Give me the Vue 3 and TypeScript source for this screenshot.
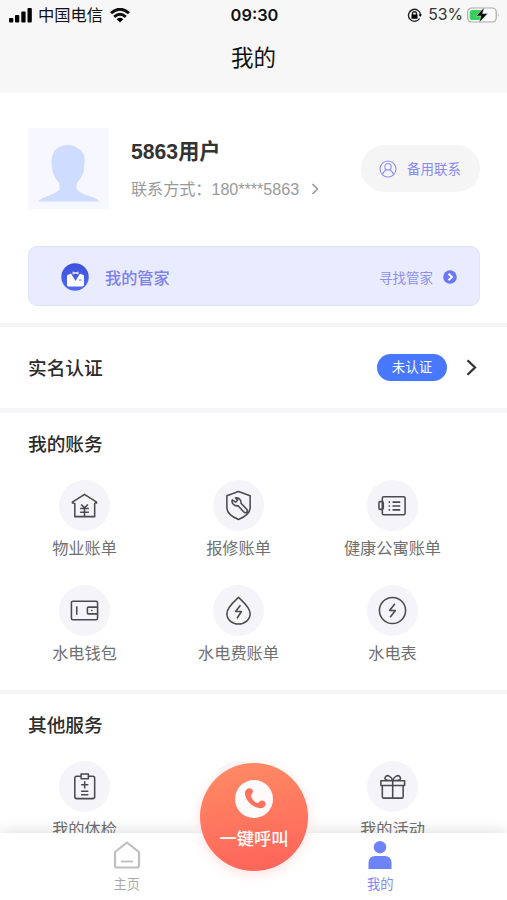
<script setup lang="ts">
type IconName = 'house' | 'repair' | 'apartment' | 'wallet' | 'drop' | 'meter' | 'checkup' | 'blank' | 'gift'
interface Entry {
  icon: IconName
  label: string
}

const bills: Entry[] = [
  { icon: 'house', label: '物业账单' },
  { icon: 'repair', label: '报修账单' },
  { icon: 'apartment', label: '健康公寓账单' },
  { icon: 'wallet', label: '水电钱包' },
  { icon: 'drop', label: '水电费账单' },
  { icon: 'meter', label: '水电表' },
]
const services: Entry[] = [
  { icon: 'checkup', label: '我的体检' },
  { icon: 'blank', label: '' },
  { icon: 'gift', label: '我的活动' },
]
const sections = [
  { title: '我的账务', items: bills },
  { title: '其他服务', items: services },
]
const paths: Record<IconName, string> = {
  house: 'M5.500 13.500H3.500V12.500L16 4.500 28.500 12.500V13.500H26.500M6 13.500V27.500H26.500V13.500M12.500 15l3.500 3.500 3.500-3.500M11.500 19h9M11.500 23h9M16 18.500v8',
  repair: 'M16 1.500 28 6V19C27.500 24.500 22 28 16 30.500 10 28 4.500 24.500 4 19V6ZM9.600 10.200l3.400 2.400 2.200-2.200-2.400-2.200c2.800-.8 6.200 1.400 5.800 5.400l6.200 6.600c1.300 2.200-1.600 4.400-3.300 2.600l-5.900-6.500c-4 .6-7.200-2.800-6-6.100Z',
  apartment: 'M7 7H27.500Q29 7 29 8.500V24Q29 25.500 27.500 25.500H7Q5.500 25.500 5.500 24V8.500Q5.500 7 7 7ZM2.800 12H5.200Q6.500 12 6.500 13.500V18.500Q6.500 20 5.200 20H2.800Q2 20 2 18.500V13.500Q2 12 2.800 12ZM12 12.500h1.500M16 12.500h8M12 16.500h1.500M16 16.500h8M12 20.500h1.500M16 20.500h8',
  wallet: 'M4 6.500H28Q29.500 6.500 29.500 8V24Q29.500 25.500 28 25.500H4Q2.500 25.500 2.500 24V8Q2.500 6.500 4 6.500ZM8 11.500v9M29.500 12.500H20Q19 12.500 19 13.500V18.500Q19 19.500 20 19.500H29.500M22.800 16h1.500',
  drop: 'M16 2.500C20 6.300 28 13 28 19.200 28 25.600 22.600 30 16 30 9.400 30 4 25.600 4 19.200 4 13 12 6.300 16 2.500ZM18 10.500 13 17H19L14.500 24',
  meter: 'M16 2.500A13.500 13.500 0 1 1 16 29.500 13.500 13.500 0 1 1 16 2.500ZM18.500 9 13 16H19L13.500 23',
  checkup: 'M12 5.500H8Q6 5.500 6 7.500V26.500Q6 28.500 8 28.500H24.500Q26.500 28.500 26.500 26.500V7.500Q26.500 5.500 24.500 5.500H20.500M12.500 3H20V8H12.500ZM16.200 10.500V18M12.500 14.200H20M12.500 21H20M12.500 24.500H20',
  blank: '',
  gift: 'M4 10H28.500V15H4ZM5.500 15V26.500Q5.500 28 7 28H25.500Q27 28 27 26.500V15M16.200 10V28M16.200 10C10.500 10 7 9.500 8.500 6.500 10.500 3 15 5.500 16.200 10 17.500 5.500 22 3 24 6.500 25.500 9.500 22 10 16.200 10Z',
}
</script>

<template>
  <div class="phone">
    <header class="head">
      <div class="status">
        <div class="carrier">
          <svg class="signal" viewBox="0 0 23 15"><rect x="0" y="10" width="4.300" height="4.500" rx="1" /><rect x="6" y="7" width="4.300" height="7.500" rx="1" /><rect x="12.300" y="3.500" width="4.300" height="11" rx="1" /><rect x="18.500" y="0" width="4.300" height="14.500" rx="1" /></svg>
          <span>中国电信</span>
          <svg class="wifi" viewBox="0 0 20 15"><g fill="none" stroke="#111" stroke-width="2.900"><path d="M1 5.200Q10-2.800 19 5.200M4.200 8.800Q10 3.800 15.800 8.800" /></g><path d="M10 14.500 6.700 11.200Q10 8.500 13.300 11.200Z" /></svg>
        </div>
        <b class="clock">09:30</b>
        <div class="power">
          <svg class="lock" viewBox="0 0 15 15"><g fill="none" stroke="#222" stroke-width="1.400"><path d="M12.600 10.500A6 6 0 1 1 13.500 7" /><path d="M5.500 7V5.700a2 2 0 0 1 4 0V7" /></g><path d="M4.500 6.500h6v4.200h-6zM11.500 6.500h3.500l-1.800 2.500z" /></svg>
          <span class="percent">53%</span>
          <svg class="battery" viewBox="0 0 33 16"><rect x=".7" y="1" width="28.500" height="14" rx="4" fill="#fbfbfb" stroke="#aaa" stroke-width="1.200" /><path d="M5 3H15V13H5Q2.700 13 2.700 10.500V5.500Q2.700 3 5 3Z" fill="#36cf5c" /><path d="M30.800 5.500Q32.500 8 30.800 10.500Z" fill="#aaa" /><path d="M17.500.2 9 9H14L12 15.800 20.800 6.600H15.500Z" fill="#050505" stroke="#f7f7f8" stroke-width=".5" /></svg>
        </div>
      </div>
      <h1>我的</h1>
    </header>

    <main class="content">
      <section class="profile">
        <div class="user">
          <svg class="avatar" viewBox="0 0 81 81"><rect width="81" height="81" rx="2" fill="#f6f7ff" /><path d="M10 73.500C15 68 27 67 31.500 61.500V55C26 50 24 43 23.700 35.500 23 25 28 17.500 38 17.200Q45 16.500 50 20.500C57 24 57.500 31 56 39 57 44 54 46 53.500 48.500 52 52 48 54 48.500 60 52 68 67 67.500 71.500 73.500Z" fill="#cedcff" /></svg>
          <div class="identity">
            <h2>5863用户</h2>
            <p>联系方式：180****5863<svg viewBox="0 0 8 12"><path d="M1.500 1 6.500 6 1.500 11" /></svg></p>
          </div>
          <div class="backup">
            <svg viewBox="0 0 18 18"><circle cx="9" cy="9" r="8" /><circle cx="9" cy="6.700" r="3.200" /><path d="M3.500 14.500Q5 10.500 7.500 9.800M10.500 9.800Q13 10.500 14.500 14.500" /></svg>
            <span>备用联系</span>
          </div>
        </div>
        <div class="keeper">
          <svg class="keeper-icon" viewBox="0 0 28 28"><defs><linearGradient id="keeper" x2="0" y2="1"><stop stop-color="#3d50d8" /><stop offset="1" stop-color="#506cf4" /></linearGradient></defs><circle cx="14" cy="14" r="13.700" fill="url(#keeper)" /><path d="M6 13Q6 11.500 8 11.500L10 10.500 14.500 18 19 10.500 21 11.500Q23 11.500 23 13V21.500Q23 23.500 21.500 23.500H7.500Q6 23.500 6 21.500Z" fill="#fff" /><path d="M11.500 8.500 14.500 9.300 17.500 8.500V11.500L14.500 10.700 11.500 11.500Z" fill="#d9defc" /><path d="M18 17h2.500" stroke="#6379ed" /></svg>
          <span class="keeper-name">我的管家</span>
          <span class="find">寻找管家</span>
          <svg class="go" viewBox="0 0 14 14"><circle cx="7" cy="7" r="6.800" fill="#6b78f5" /><path d="M5.500 3.700 9 7 5.500 10.300" fill="none" stroke="#fff" stroke-width="1.900" /></svg>
        </div>
      </section>

      <section class="verify">
        <h3>实名认证</h3>
        <span class="badge">未认证</span>
        <svg viewBox="0 0 11 17"><path d="M1.500 1.200 9 8.500 1.500 15.800" /></svg>
      </section>

      <section v-for="section in sections" :key="section.title" class="group">
        <h3>{{ section.title }}</h3>
        <div class="grid">
          <div v-for="item in section.items" :key="item.icon" class="entry">
            <div class="disc">
              <svg viewBox="0 0 32 32"><path :d="paths[item.icon]" /></svg>
            </div>
            <span>{{ item.label }}</span>
          </div>
        </div>
      </section>
    </main>

    <nav class="tabs">
      <div class="tab">
        <svg viewBox="0 0 28 28"><path d="M14 1.500 26 11V24.500Q26 26.500 24 26.500H4Q2 26.500 2 24.500V11Z" fill="none" stroke="#bebebe" stroke-width="2.200" stroke-linejoin="round" /><path d="M8 20.500H20" stroke="#bebebe" stroke-width="1.800" /></svg>
        <span>主页</span>
      </div>
      <div class="tab active">
        <svg viewBox="0 0 28 28"><circle cx="14" cy="6.200" r="6.200" fill="#6d83fa" /><path d="M2.500 28V22Q2.500 15 9.500 15H18.500Q25.500 15 25.500 22V28Z" fill="#6d83fa" /></svg>
        <span>我的</span>
      </div>
      <div class="call">
        <svg viewBox="0 0 38 38"><circle cx="19" cy="19" r="19" fill="#fffafa" /><path d="M11.500 9.500C14 7 18 8.500 18 11.500 18 13.500 15.500 14.500 16 16.500 17 19.500 19.500 22 22 23 24 23.500 24.500 20.500 27 20.500 30 20.500 31.500 23.500 30 26 27.500 29.500 21.500 28.500 17 25 11 20.500 8 13 11.500 9.500Z" fill="#ff715c" /></svg>
        <span>一键呼叫</span>
      </div>
    </nav>
  </div>
</template>

<style>
body { margin: 0; }
</style>
<style scoped>
* { box-sizing: border-box; }
h1, h2, h3, p { margin: 0; }
svg { display: block; flex: none; }
.phone {
  width: 507px; height: 900px; display: flex; flex-direction: column; overflow: hidden;
  background: #fff; color: #333; font-family: "Liberation Sans", "Noto Sans CJK SC", sans-serif;
}
.head { height: 93px; flex: none; background: #f7f7f8; color: #111; }
.status { height: 30px; display: grid; grid-template-columns: 1fr auto 1fr; align-items: center; padding: 0 7px 0 9px; font-size: 16.300px; line-height: 24px; }
.carrier, .power { display: flex; align-items: center; }
.signal { width: 23px; height: 15px; margin-right: 6px; }
.wifi { width: 20px; height: 15px; margin-left: 7px; }
.clock { font: 600 16.400px/24px Inter, sans-serif; }
.power { justify-content: flex-end; }
.lock { width: 15px; height: 15px; margin-right: 6px; }
.percent { font: 400 15.800px/24px Inter, sans-serif; margin-right: 4px; color: #333; }
.battery { width: 33px; height: 16px; }
h1 { font-size: 22.500px; line-height: 30px; font-weight: 400; text-align: center; margin-top: 14px; }
.content { flex: 1; min-height: 0; overflow: hidden; }
.profile { height: 234px; padding: 35px 27px 0 28px; border-bottom: 4px solid #f6f6f7; }
.user { display: flex; align-items: flex-start; }
.avatar { width: 81px; height: 81px; }
.identity { flex: 1; padding: 9px 0 0 22px; }
h2 { font-size: 21.200px; line-height: 30px; font-weight: 700; }
.identity p { display: flex; align-items: center; margin-top: 10px; font-size: 16.100px; line-height: 24px; color: #999; white-space: nowrap; }
.identity p svg { width: 8px; height: 12px; margin-left: 12px; fill: none; stroke: #999; stroke-width: 1.600; }
.backup { display: flex; align-items: center; width: 119px; height: 47px; margin-top: 17px; padding-left: 18px; border-radius: 24px; background: #f5f5f6; color: #8789f5; font-size: 13.500px; }
.backup svg { width: 18px; height: 18px; margin-right: 10px; fill: none; stroke: #8e90f7; stroke-width: 1.100; }
.backup span { margin-top: -1px; }
.keeper { display: flex; align-items: center; height: 60px; margin-top: 37px; padding: 2px 22px 0 32px; border: 1px solid #dfe4fc; border-radius: 9px; background: #e9ecfe; color: #7c80ef; }
.keeper-icon { width: 28px; height: 28px; margin-right: 16px; }
.keeper-name { font-size: 16.200px; font-weight: 500; }
.find { margin-left: auto; font-size: 13.500px; color: #8d8ff1; }
.go { width: 14px; height: 14px; margin-left: 10px; }
.verify { display: flex; align-items: center; height: 86px; padding: 0 30px 0 28px; border-bottom: 5px solid #f6f6f8; }
h3 { font-size: 18.700px; line-height: 28px; font-weight: 500; color: #2b2b2b; padding-top: 1px; }
.verify h3 { padding-top: 2px; }
.badge { width: 70px; height: 27px; margin-left: auto; border-radius: 14px; background: #4778ff; color: #fff; font-size: 13.500px; line-height: 27px; text-align: center; }
.verify > svg { width: 11px; height: 17px; margin-left: 20px; fill: none; stroke: #333; stroke-width: 2.300; }
.verify .badge { margin-right: -1px; }
.group { height: 280.500px; padding-top: 17px; border-bottom: 4px solid #f6f6f8; }
.group h3 { padding-left: 28px; }
.grid { display: grid; grid-template-columns: repeat(3, 154px); grid-auto-rows: 105px; margin: 21px 0 0 7.500px; }
.entry { display: flex; flex-direction: column; align-items: center; font-size: 16.200px; line-height: 24px; color: #707070; }
.disc { display: grid; place-items: center; width: 51px; height: 51px; margin-bottom: 5px; border-radius: 50%; background: #f4f4f9; }
.disc svg { width: 31px; height: 31px; fill: none; stroke: #4a4a50; stroke-width: 1.600; stroke-linejoin: round; }
.tabs { position: relative; display: flex; flex: none; height: 67px; background: #fff; box-shadow: 0 -2px 14px rgba(0, 0, 0, .12); }
.tab { flex: 1; display: flex; flex-direction: column; align-items: center; padding-top: 8px; font-size: 13.300px; line-height: 20px; color: #aaa; }
.tab svg { width: 28px; height: 28px; margin-bottom: 6px; }
.tab.active { color: #8189fa; }
.call { position: absolute; left: 200px; top: -70px; display: flex; flex-direction: column; align-items: center; width: 108px; height: 108px; padding-top: 17px; border-radius: 50%; background: linear-gradient(170deg, #ff8c65, #ff6259); box-shadow: 0 4px 12px rgba(255, 100, 100, .16), 0 0 12px 5px rgba(255, 250, 250, .65); color: #fff; font-size: 17.300px; line-height: 24px; font-weight: 500; }
.call svg { width: 38px; height: 38px; margin-bottom: 9px; }
</style>
